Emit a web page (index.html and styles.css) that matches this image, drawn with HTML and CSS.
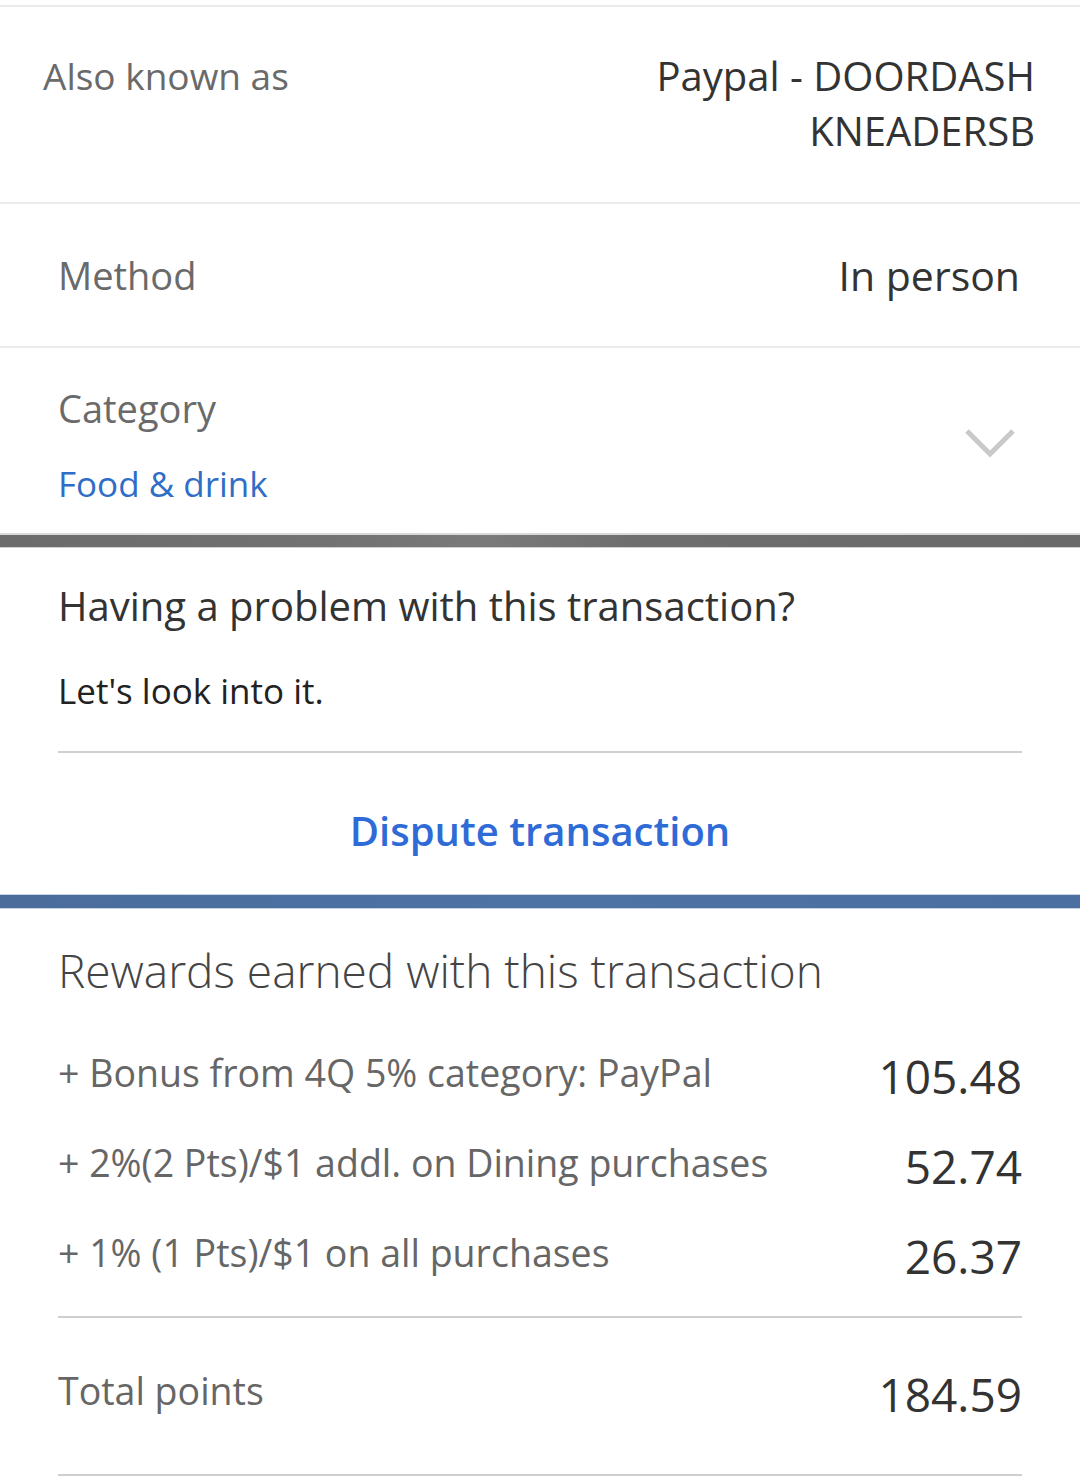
FILE: index.html
```html
<!DOCTYPE html>
<html lang="en">
<head>
<meta charset="utf-8">
<title>Transaction details</title>
<link rel="stylesheet" href="styles.css">
</head>
<body>
<div class="page">
  <section class="row row-aka">
    <div class="label">Also known as</div>
    <div class="value value-multi">Paypal - DOORDASH<br>KNEADERSB</div>
  </section>
  <section class="row row-method">
    <div class="label">Method</div>
    <div class="value">In person</div>
  </section>
  <section class="row row-category">
    <div class="cat-text">
      <div class="label">Category</div>
      <div class="link">Food &amp; drink</div>
    </div>
    <svg class="chevron" width="52" height="34" viewBox="0 0 52 34" aria-hidden="true">
      <polyline points="3,5 26,28 49,5" fill="none" stroke="#c9c9c9" stroke-width="5"/>
    </svg>
  </section>
  <div class="band band-gray"></div>
  <section class="problem">
    <h2 class="problem-title">Having a problem with this transaction?</h2>
    <p class="problem-sub">Let's look into it.</p>
    <div class="rule"></div>
    <div class="dispute">Dispute transaction</div>
  </section>
  <div class="band band-blue"></div>
  <section class="rewards">
    <h2 class="rewards-title">Rewards earned with this transaction</h2>
    <div class="reward-list">
      <div class="reward"><span class="r-label">+ Bonus from 4Q 5% category: PayPal</span><span class="r-value">105.48</span></div>
      <div class="reward"><span class="r-label">+ 2%(2 Pts)/$1 addl. on Dining purchases</span><span class="r-value">52.74</span></div>
      <div class="reward"><span class="r-label">+ 1% (1 Pts)/$1 on all purchases</span><span class="r-value">26.37</span></div>
    </div>
    <div class="rule rule-rewards"></div>
    <div class="reward total"><span class="r-label">Total points</span><span class="r-value">184.59</span></div>
    <div class="rule rule-rewards"></div>
  </section>
</div>
</body>
</html>
```
FILE: styles.css
```css
* { box-sizing: border-box; }
html, body { margin: 0; padding: 0; background: #fff; }
body { font-family: "Open Sans", "Noto Sans", sans-serif; -webkit-font-smoothing: antialiased; }
.page { width: 1080px; padding-top: 5px; }

.row {
  display: flex;
  justify-content: space-between;
  border-top: 2px solid #ebebeb;
  padding: 0 60px 0 58px;
}
.label { font-size: 38px; color: #6a6a6a; line-height: 50px; }
.value { font-size: 41px; color: #333; line-height: 50px; text-align: right; }

.row-aka { height: 197px; padding: 41px 45px 0 43px; align-items: flex-start; }
.row-aka .label { font-size: 37px; line-height: 55px; }
.value-multi { font-size: 40px; line-height: 55px; }

.row-method { height: 144px; align-items: center; }

.row-category { height: 187px; padding-top: 35px; align-items: flex-start; }
.link { font-size: 35px; color: #2f6ec7; line-height: 50px; margin-top: 26px; }
.chevron { margin-top: 43px; margin-right: 4px; }

.band { width: 100%; height: 15px; }
.band-gray {
  border-top: 2px solid #d9d9d9;
  border-bottom: 1px solid #d0d0d0;
  background: linear-gradient(90deg, #6c6c6c 0%, #727272 30%, #7a7a7a 45%, #6e6e6e 60%, #6a6a6a 100%);
}
.band-blue {
  border-top: 1px solid #c7d3e3;
  border-bottom: 1px solid #c7d3e3;
  background: linear-gradient(90deg, #4a6d9c 0%, #4d72a4 50%, #4b6fa0 100%);
}

.problem { padding: 33px 58px 35px 58px; }
.problem-title { margin: 0; font-size: 40px; font-weight: 400; color: #333; line-height: 50px; }
.problem-sub { margin: 38px 0 0; font-size: 35px; color: #222; line-height: 44px; }
.rule { height: 2px; background: #cfcfcf; }
.problem .rule { margin-top: 38px; }
.dispute { margin-top: 50px; text-align: center; font-size: 40px; font-weight: 600; color: #2f6bd6; line-height: 56px; }

.rewards { padding: 31px 58px 0 58px; }
.rewards-title { margin: 0; font-size: 46px; font-weight: 300; color: #444; line-height: 60px; }
.reward-list { margin-top: 27px; }
.reward { display: flex; justify-content: space-between; align-items: center; height: 90px; }
.r-label { font-size: 37.5px; color: #666; }
.r-value { font-size: 46px; color: #333; padding-top: 8px; }
.rule-rewards { margin-top: 19px; }
.reward.total { height: 156px; padding-bottom: 12px; }
.reward.total + .rule-rewards { margin-top: 0; }
```
